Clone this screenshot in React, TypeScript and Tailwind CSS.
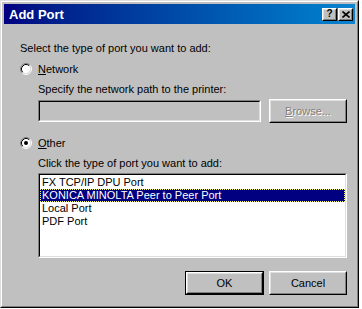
import React from 'react';

const Radio = ({ checked }: { checked?: boolean }) => (
  <svg width="12" height="12" viewBox="0 0 12 12" className="shrink-0">
    <circle cx="6" cy="6" r="4.5" fill="#fff" />
    <path d="M2.11 9.89 A5.5 5.5 0 0 1 9.89 2.11" stroke="#808080" strokeWidth="1" fill="none" />
    <path d="M9.89 2.11 A5.5 5.5 0 0 1 2.11 9.89" stroke="#fff" strokeWidth="1" fill="none" />
    <path d="M2.82 9.18 A4.5 4.5 0 0 1 9.18 2.82" stroke="#000" strokeWidth="1" fill="none" />
    <path d="M9.18 2.82 A4.5 4.5 0 0 1 2.82 9.18" stroke="#dfdfdf" strokeWidth="1" fill="none" />
    {checked && <circle cx="6" cy="6" r="2" fill="#000" />}
  </svg>
);

const CaptionButton = ({ children }: { children: React.ReactNode }) => (
  <div className="w-[15px] h-[13px] border border-t-white border-l-white border-r-black border-b-black bg-[#c0c0c0]">
    <div className="w-full h-full border border-t-[#dfdfdf] border-l-[#dfdfdf] border-r-[#808080] border-b-[#808080] flex items-center justify-center">
      {children}
    </div>
  </div>
);

const PushButton = ({ label, isDefault, disabled, accel }: { label: string; isDefault?: boolean; disabled?: boolean; accel?: boolean }) => {
  const face = (
    <div className="w-full h-full border border-t-white border-l-white border-r-black border-b-black">
      <div className="w-full h-full border border-t-[#dfdfdf] border-l-[#dfdfdf] border-r-[#808080] border-b-[#808080] flex items-center justify-center">
        <span className={disabled ? 'text-[#808080] [text-shadow:1px_1px_0_#fff]' : 'text-black'}>
          {accel ? (
            <>
              <span className="underline">{label[0]}</span>
              {label.slice(1)}
            </>
          ) : (
            label
          )}
        </span>
      </div>
    </div>
  );
  if (isDefault) {
    return <div className="w-[79px] h-[24px] border border-black">{face}</div>;
  }
  return <div className="w-[78px] h-[24px]">{face}</div>;
};

const ports = ['FX TCP/IP DPU Port', 'KONICA MINOLTA Peer to Peer Port', 'Local Port', 'PDF Port'];

export default function App() {
  return (
    <div className="w-[362px] h-[309px] bg-white font-['Liberation_Sans',Arial,sans-serif] text-[11px] text-black leading-none">
      <div className="w-[359px] h-[308px] bg-[#c0c0c0] border border-t-[#dfdfdf] border-l-[#dfdfdf] border-r-black border-b-black">
        <div className="w-full h-full border border-t-white border-l-white border-r-[#808080] border-b-[#808080] p-[2px] flex flex-col">
          {/* title bar */}
          <div className="h-[20px] bg-linear-to-r from-[#000080] to-[#1084d0] flex items-center pl-[5px] pr-[2px]">
            <span className="text-white font-bold text-[13px] flex-1">Add Port</span>
            <div className="flex gap-[1px]">
              <CaptionButton>
                <span className="font-bold text-[10px] leading-none text-black">?</span>
              </CaptionButton>
              <CaptionButton>
                <svg width="8" height="7" viewBox="0 0 8 7">
                  <path d="M0.5 0.5 L7.5 6.5 M7.5 0.5 L0.5 6.5" stroke="#000" strokeWidth="1.6" />
                </svg>
              </CaptionButton>
            </div>
          </div>

          <div className="flex flex-col pl-[16px] pr-[8px]">
            <div className="mt-[17px] h-[14px] flex items-center">Select the type of port you want to add:</div>

            <div className="mt-[7px] h-[14px] flex items-center">
              <Radio />
              <span className="ml-[6px]">
                <span className="underline">N</span>etwork
              </span>
            </div>

            <div className="pl-[18px] flex flex-col">
              <div className="mt-[6px] h-[14px] flex items-center">Specify the network path to the printer:</div>
              <div className="mt-[3px] h-[24px] flex items-center gap-[8px]">
                <div className="flex-1 h-[22px] border border-t-[#808080] border-l-[#808080] border-r-white border-b-white">
                  <div className="w-full h-full border border-t-black border-l-black border-r-[#dfdfdf] border-b-[#dfdfdf] bg-[#c0c0c0]" />
                </div>
                <PushButton label="Browse..." disabled accel />
              </div>
            </div>

            <div className="mt-[13px] h-[14px] flex items-center">
              <Radio checked />
              <span className="ml-[6px]">
                <span className="underline">O</span>ther
              </span>
            </div>

            <div className="pl-[18px] flex flex-col">
              <div className="mt-[6px] h-[14px] flex items-center">Click the type of port you want to add:</div>
              <div className="mt-[3px] h-[85px] border border-t-[#808080] border-l-[#808080] border-r-white border-b-white">
                <div className="w-full h-full border border-t-black border-l-black border-r-[#dfdfdf] border-b-[#dfdfdf] bg-white pt-[1px]">
                  {ports.map((p, i) =>
                    i === 1 ? (
                      <div key={p} className="h-[13px] flex items-center px-[1px] bg-[#000080] text-white border border-dotted border-[#ffff80]">
                        {p}
                      </div>
                    ) : (
                      <div key={p} className="h-[13px] flex items-center px-[2px]">
                        {p}
                      </div>
                    )
                  )}
                </div>
              </div>
            </div>

            <div className="mt-[13px] flex justify-end gap-[5px]">
              <PushButton label="OK" isDefault />
              <PushButton label="Cancel" />
            </div>
          </div>
        </div>
      </div>
    </div>
  );
}
